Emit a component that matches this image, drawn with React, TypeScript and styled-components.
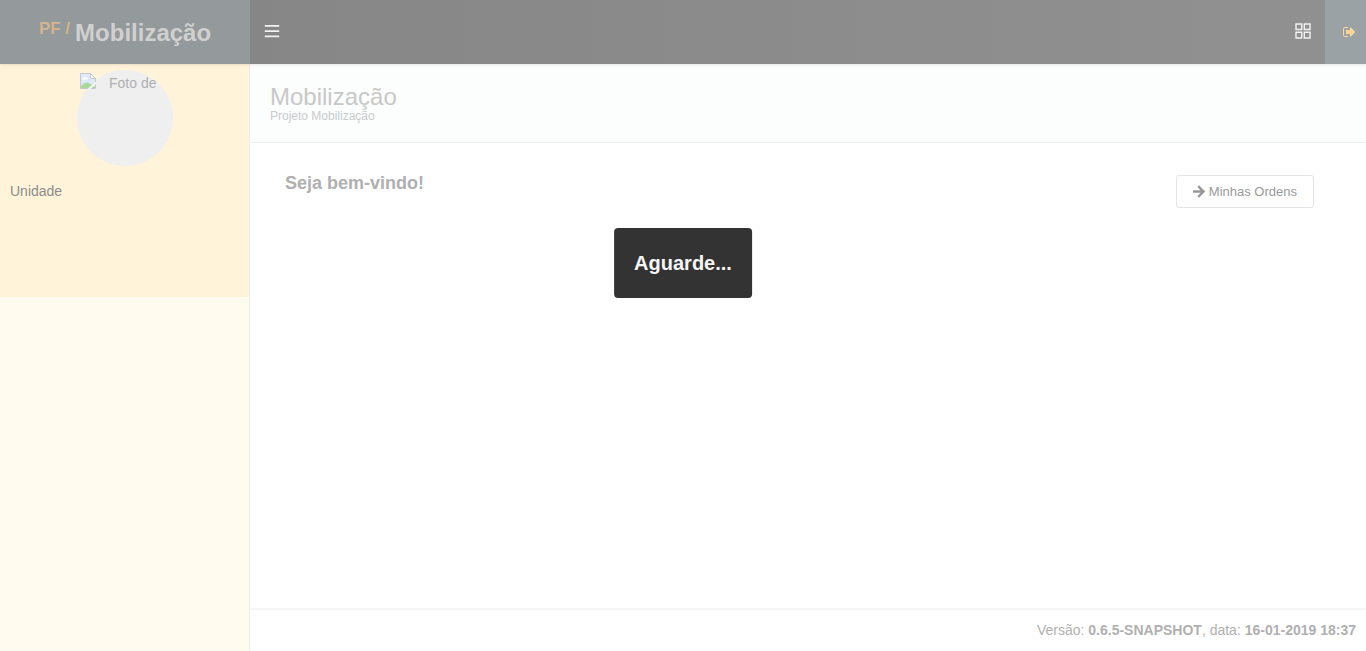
import React from "react";
import styled, { createGlobalStyle } from "styled-components";

const GlobalStyle = createGlobalStyle`
  *, *::before, *::after { box-sizing: border-box; }
  body {
    margin: 0;
    background: #ffffff;
    color: #8c8c8c;
    font-family: "Liberation Sans", Arial, sans-serif;
    font-size: 14px;
    line-height: 20px;
  }
  h1, h2, p { margin: 0; }
`;

const Page = styled.div`
  min-height: 100vh;
  display: flex;
  flex-direction: column;
`;

const Header = styled.header`
  position: relative;
  z-index: 1;
  display: flex;
  height: 64px;
  background: linear-gradient(90deg, #848484, #919191);
  box-shadow: 0 1px 3px rgba(0, 0, 0, 0.1);
`;

const Brand = styled.a`
  flex: 0 0 250px;
  display: flex;
  justify-content: center;
  gap: 5px;
  padding-top: 18px;
  background: #94999b;
  color: #d0d0d0;
  font-size: 24px;
  line-height: 30px;
  font-weight: bold;
  text-decoration: none;
`;

const BrandPrefix = styled.span`
  color: #d2b48e;
  font-size: 17px;
  line-height: 22px;
`;

const HeaderActions = styled.div`
  display: flex;
  margin-left: auto;
`;

const IconButton = styled.button<{ $accent?: boolean }>`
  display: flex;
  align-items: center;
  justify-content: center;
  width: ${(p) => (p.$accent ? 41 : 44)}px;
  padding: ${(p) => (p.$accent ? "0 0 0 8px" : "0 0 2px")};
  border: 0;
  background: ${(p) => (p.$accent ? "#9aa2a5" : "transparent")};
  color: ${(p) => (p.$accent ? "#ffd596" : "#f2f2f2")};
  cursor: pointer;
`;

const Body = styled.div`
  flex: 1;
  display: flex;
`;

const Sidebar = styled.aside`
  flex: 0 0 250px;
  border-right: 1px solid #ececec;
  background: #fffbef;
`;

const Profile = styled.section`
  display: flex;
  flex-direction: column;
  min-height: 233px;
  padding: 6px 10px;
  background: #fff4d9;
`;

const Photo = styled.div`
  align-self: center;
  display: flex;
  align-items: flex-start;
  gap: 13px;
  width: 96px;
  height: 96px;
  margin-left: 1px;
  padding: 3px;
  border-radius: 50%;
  background: #efefef;
  color: #b0b0b0;
  white-space: nowrap;
`;

const Unit = styled.p`
  margin-top: 15px;
`;

const Main = styled.main`
  flex: 1;
  min-width: 0;
  display: flex;
  flex-direction: column;
`;

const PageHeading = styled.div`
  padding: 20px 20px 19px;
  border-bottom: 1px solid #e7edf0;
  background: #fbfefd;
`;

const Title = styled.h1`
  color: #c8c8c8;
  font-size: 24px;
  line-height: 26px;
  font-weight: normal;
`;

const Subtitle = styled.p`
  color: #c8cccd;
  font-size: 12px;
  line-height: 13px;
`;

const Content = styled.section`
  flex: 1;
  display: flex;
  align-items: flex-start;
  justify-content: space-between;
  padding: 32px 52px 32px 35px;
`;

const Welcome = styled.h2`
  color: #b0b0b0;
  font-size: 18px;
  line-height: 16px;
`;

const OrdersButton = styled.button`
  display: flex;
  align-items: center;
  gap: 4px;
  height: 33px;
  padding: 0 16px;
  border: 1px solid #e4e4e4;
  border-radius: 3px;
  background: #ffffff;
  color: #999999;
  font-family: inherit;
  font-size: 13px;
  line-height: 20px;
  cursor: pointer;
`;

const Footer = styled.footer`
  padding: 10px 10px 11px;
  border-top: 2px solid #f5f5f5;
  color: #b0b0b0;
  text-align: right;
`;

const WaitMessage = styled.div`
  position: fixed;
  z-index: 2;
  top: 35%;
  left: 50%;
  transform: translateX(-50%);
  padding: 20px;
  border-radius: 4px;
  background: #333333;
  color: #f5f5f5;
  font-size: 20px;
  line-height: 30px;
  font-weight: bold;
`;

const MenuIcon = () => (
  <svg width="16" height="14" viewBox="0 0 16 14" fill="currentColor" aria-hidden="true">
    <path d="M.8 1h14.400v1.800H.8zM.8 6.300h14.400V8H.8zM.8 11.500h14.400v1.700H.8z" />
  </svg>
);

const GridIcon = () => (
  <svg width="16" height="16" viewBox="0 0 16 16" fill="none" stroke="currentColor" strokeWidth="1.4" aria-hidden="true">
    <path d="M1 1h5.700v5.500H1zM9.300 1H15v5.500H9.300zM1 9.300h5.700V15H1zM9.300 9.300H15V15H9.300z" />
  </svg>
);

const LogoutIcon = () => (
  <svg width="13" height="14" viewBox="0 0 1664 1792" fill="currentColor" aria-hidden="true">
    <path d="M640 1440q0 4 1 20t.5 26.500-3 23.500-10 19.500-20.500 6.500H288q-119 0-203.500-84.500T0 1248V544q0-119 84.500-203.500T288 256h320q13 0 22.500 9.500T640 288q0 4 1 20t.5 26.500-3 23.500-10 19.500T608 384H288q-66 0-113 47t-47 113v704q0 66 47 113t113 47h312l11.500 1 11.500 3 8 5.500 7 9zM1568 896q0 26-19 45l-544 544q-19 19-45 19t-45-19-19-45v-288H448q-26 0-45-19t-19-45V704q0-26 19-45t45-19h448V352q0-26 19-45t45-19 45 19l544 544q19 19 19 45z" />
  </svg>
);

const ArrowIcon = () => (
  <svg width="12" height="13" viewBox="0 0 12 13" fill="none" stroke="currentColor" strokeWidth="2.4" aria-hidden="true">
    <path d="M0 6.500h10M5.200 1.200l5.300 5.300-5.300 5.300" />
  </svg>
);

const MissingImageIcon = () => (
  <svg width="16" height="16" viewBox="0 0 16 16" aria-hidden="true">
    <path d="M.5.5h10l5 5v10H.5z" fill="#dfe8fc" />
    <path d="M2 6.500c0-1.500 1-2 2-1.700.6-1.700 3-1.300 3 .3 1.300 0 1.300 1.400 0 1.400z" fill="#fff" />
    <path d="M1 15v-1.500c3-4.500 7-5 9.500-2.500l4.500 3v1z" fill="#abd79b" />
    <path d="M10.500.5v5h5z" fill="#fff" />
    <path d="M.5.5h10l5 5v10H.5zM10.500.5v5h5" fill="none" stroke="#c6c8cc" />
    <path d="M7.500 16L16 8.500v2.500l-5.500 5z" fill="#f5f5f2" />
  </svg>
);

export default function App() {
  return (
    <>
      <GlobalStyle />
      <Page>
        <Header>
          <Brand href="#">
            <BrandPrefix>PF /</BrandPrefix>
            <span>Mobilização</span>
          </Brand>
          <IconButton type="button" aria-label="Menu">
            <MenuIcon />
          </IconButton>
          <HeaderActions>
            <IconButton type="button" aria-label="Aplicativos">
              <GridIcon />
            </IconButton>
            <IconButton type="button" aria-label="Sair" $accent>
              <LogoutIcon />
            </IconButton>
          </HeaderActions>
        </Header>
        <Body>
          <Sidebar>
            <Profile>
              <Photo>
                <MissingImageIcon />
                <span>Foto de</span>
              </Photo>
              <Unit>Unidade</Unit>
            </Profile>
          </Sidebar>
          <Main>
            <PageHeading>
              <Title>Mobilização</Title>
              <Subtitle>Projeto Mobilização</Subtitle>
            </PageHeading>
            <Content>
              <Welcome>Seja bem-vindo!</Welcome>
              <OrdersButton type="button">
                <ArrowIcon />
                Minhas Ordens
              </OrdersButton>
            </Content>
            <Footer>
              Versão: <strong>0.6.5-SNAPSHOT</strong>, data: <strong>16-01-2019 18:37</strong>
            </Footer>
          </Main>
        </Body>
      </Page>
      <WaitMessage role="status">Aguarde...</WaitMessage>
    </>
  );
}
